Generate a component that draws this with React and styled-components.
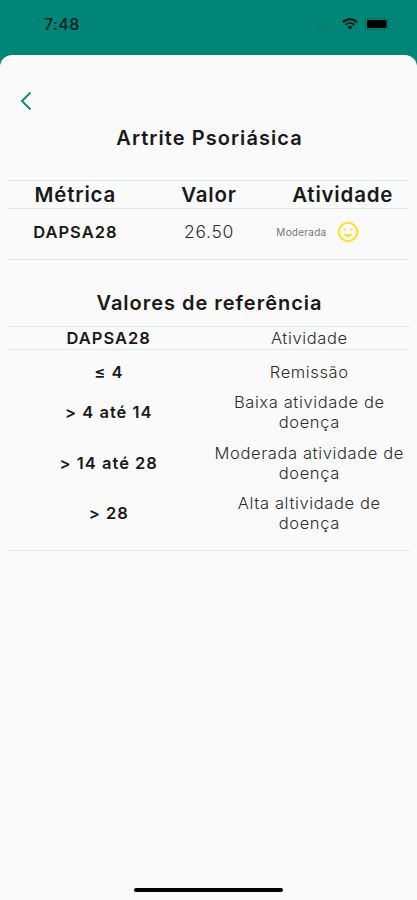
import styled, { createGlobalStyle } from 'styled-components';

const references = [
  { range: '≤ 4', label: 'Remissão', height: 31 },
  { range: '> 4 até 14', label: 'Baixa atividade de doença', height: 50.5 },
  { range: '> 14 até 28', label: 'Moderada atividade de doença', height: 50.5 },
  { range: '> 28', label: 'Alta altividade de doença', height: 50.5 },
];

const App = () => {
  return (
    <Screen>
      <GlobalStyle />
      <StatusBar>
        <Time>7:48</Time>
        <StatusIcons>
          <Signal>
            <i />
            <i />
            <i />
            <i />
          </Signal>
          <WifiIcon />
          <BatteryIcon />
        </StatusIcons>
      </StatusBar>

      <Sheet>
        <BackButton aria-label="Voltar">
          <svg width="12" height="20" viewBox="0 0 12 20" fill="none">
            <path d="M10.5 1.5L2 10L10.5 18.5" stroke="#17897b" strokeWidth="2" />
          </svg>
        </BackButton>

        <Title>Artrite Psoriásica</Title>

        <Table>
          <HeadRow $height={27}>
            <HeadCell>Métrica</HeadCell>
            <HeadCell>Valor</HeadCell>
            <HeadCell>Atividade</HeadCell>
          </HeadRow>
          <MetricRow $height={50}>
            <StrongCell>DAPSA28</StrongCell>
            <ValueCell>26.50</ValueCell>
            <ActivityCell>
              <Level>Moderada</Level>
              <SmileIcon />
            </ActivityCell>
          </MetricRow>
        </Table>

        <Subtitle>Valores de referência</Subtitle>

        <Table>
          <HeadRow $height={22}>
            <StrongCell>DAPSA28</StrongCell>
            <TextCell>Atividade</TextCell>
          </HeadRow>
          <ReferenceList>
            {references.map(({ range, label, height }) => (
              <Row key={range} $height={height}>
                <StrongCell>{range}</StrongCell>
                <TextCell>{label}</TextCell>
              </Row>
            ))}
          </ReferenceList>
        </Table>

        <HomeIndicator />
      </Sheet>
    </Screen>
  );
};

const WifiIcon = () => (
  <svg width="16" height="12" viewBox="0 0 16 12" fill="none" stroke="#03110f">
    <path d="M1 4.2C5 0.2 11 0.2 15 4.2" strokeWidth="2" />
    <path d="M3.6 7C6.2 4.5 9.8 4.5 12.4 7" strokeWidth="1.8" />
    <path d="M5.6 9L8 11.6L10.4 9C9 7.8 7 7.8 5.6 9Z" fill="#03110f" stroke="none" />
  </svg>
);

const BatteryIcon = () => (
  <svg width="26" height="12" viewBox="0 0 26 12" fill="none">
    <rect x="0.5" y="0.5" width="22.5" height="11" rx="2.5" stroke="#02695e" />
    <rect x="2" y="2" width="19.5" height="8" rx="1" fill="#000" />
    <path d="M24.2 4V8C25.6 7.4 25.6 4.6 24.2 4Z" fill="#02695e" />
  </svg>
);

const SmileIcon = () => (
  <svg width="22" height="22" viewBox="0 0 22 22" fill="none">
    <circle cx="11" cy="11" r="9.2" stroke="#fde02c" strokeWidth="2" />
    <circle cx="7.6" cy="8.6" r="1.3" fill="#fde645" />
    <circle cx="14.4" cy="8.6" r="1.3" fill="#fde645" />
    <path d="M6.6 13H15.4C14.6 15 12.9 16 11 16C9.1 16 7.4 15 6.6 13Z" fill="#fde02c" />
  </svg>
);

const GlobalStyle = createGlobalStyle`
  * {
    box-sizing: border-box;
  }

  body {
    margin: 0;
    background: #008577;
    font-family: Inter, sans-serif;
    color: #191919;
  }
`;

const Screen = styled.div`
  display: flex;
  flex-direction: column;
  height: 900px;
  background: #008577;
`;

const StatusBar = styled.header`
  display: flex;
  align-items: center;
  justify-content: space-between;
  height: 55px;
  padding: 0 26px 7px 44px;
`;

const Time = styled.span`
  font-size: 16px;
  font-weight: 500;
  letter-spacing: 0.4px;
  color: #04201d;
`;

const StatusIcons = styled.div`
  display: flex;
  align-items: center;
  gap: 7px;
`;

const Signal = styled.div`
  display: flex;
  align-items: flex-end;
  gap: 3px;
  height: 11px;

  i {
    width: 2px;
    height: 2px;
    border-radius: 1px;
    background: #036b61;
  }
`;

const Sheet = styled.main`
  display: flex;
  flex-direction: column;
  flex: 1;
  padding: 0 8px 8px;
  border-radius: 12px 12px 0 0;
  background: #fafafa;
`;

const BackButton = styled.button`
  display: flex;
  align-self: flex-start;
  margin: 36px 0 0 12px;
  padding: 0;
  border: 0;
  background: none;
`;

const Title = styled.h1`
  margin: 12px 0 27px;
  padding-left: 2px;
  font-size: 20px;
  font-weight: 600;
  line-height: 30px;
  letter-spacing: 1.05px;
  text-align: center;
`;

const Subtitle = styled(Title)`
  margin: 28px 0 8px;
  letter-spacing: 0.98px;
`;

const Table = styled.section`
  border-bottom: 1px solid #e0e8e8;
`;

const Row = styled.div`
  display: flex;
  align-items: center;
  height: ${props => props.$height}px;
`;

const HeadRow = styled(Row)`
  box-sizing: content-box;
  border: 1px solid #e0e8e8;
  border-width: 1px 0;
`;

const MetricRow = styled(Row)`
  padding-bottom: 4px;
`;

const ReferenceList = styled.div`
  padding: 6px 0 11.5px;
`;

const Cell = styled.div`
  flex: 1 1 0;
  min-width: 0;
  padding-left: 1px;
  font-size: 16.5px;
  line-height: 20px;
  text-align: center;
`;

const HeadCell = styled(Cell)`
  padding-top: 1px;
  font-size: 20.5px;
  font-weight: 600;
  letter-spacing: 0.8px;
`;

const StrongCell = styled(Cell)`
  font-weight: 600;
  letter-spacing: 1px;
`;

const TextCell = styled(Cell)`
  font-weight: 300;
  letter-spacing: 0.62px;
  color: #2c2c2c;
`;

const ValueCell = styled(Cell)`
  font-size: 17.5px;
  font-weight: 300;
  letter-spacing: 0.7px;
  color: #2c2c2c;
`;

const ActivityCell = styled(Cell)`
  display: flex;
  align-items: center;
  gap: 11px;
`;

const Level = styled.span`
  font-size: 10px;
  font-weight: 400;
  letter-spacing: 0.25px;
  color: #777;
`;

const HomeIndicator = styled.div`
  align-self: center;
  width: 149px;
  height: 4px;
  margin-top: auto;
  border-radius: 2px;
  background: #000;
`;

export default App;
